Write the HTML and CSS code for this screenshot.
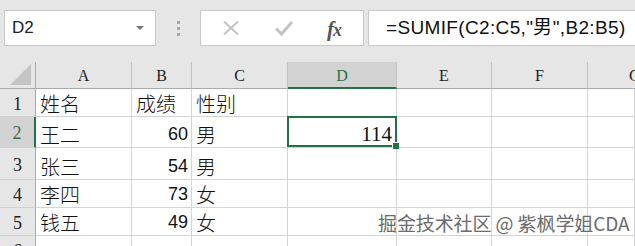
FILE: index.html
```html
<!DOCTYPE html>
<html lang="zh-CN">
<head>
<meta charset="utf-8">
<title>SUMIF</title>
<link rel="stylesheet" href="styles.css">
</head>
<body>
<div class="app">
  <div class="toolbar">
    <div class="namebox">
      <span class="name">D2</span>
      <svg class="caret" width="10" height="6" viewBox="0 0 10 6"><path d="M1 1h8L5 5z" fill="#777"/></svg>
    </div>
    <div class="grip"><i></i><i></i><i></i></div>
    <div class="fbuttons">
      <svg class="ico" width="20" height="16" viewBox="0 0 20 16"><path d="M3 1.5L17 14.5M17 1.5L3 14.5" stroke="#c3c3c3" stroke-width="2" fill="none"/></svg>
      <svg class="ico" width="20" height="16" viewBox="0 0 20 16"><path d="M2 8.5l5.5 5.5L18 2" stroke="#c3c3c3" stroke-width="3" fill="none"/></svg>
      <span class="fx"><i>f</i><i>x</i></span>
    </div>
    <div class="formula">=SUMIF(C2:C5,"男",B2:B5)</div>
  </div>

  <div class="sheet">
    <div class="hd corner"><svg width="22" height="21" viewBox="0 0 22 21"><path d="M21 0V21H0z" fill="#c4c4c4"/></svg></div>
    <div class="hd col">A</div>
    <div class="hd col">B</div>
    <div class="hd col">C</div>
    <div class="hd col sel">D</div>
    <div class="hd col">E</div>
    <div class="hd col">F</div>
    <div class="hd col last">G</div>

    <div class="hd row">1</div>
    <div class="c t">姓名</div>
    <div class="c t">成绩</div>
    <div class="c t">性别</div>
    <div class="c"></div>
    <div class="c"></div>
    <div class="c"></div>
    <div class="c"></div>

    <div class="hd row sel">2</div>
    <div class="c t">王二</div>
    <div class="c n">60</div>
    <div class="c t">男</div>
    <div class="c r active">114</div>
    <div class="c"></div>
    <div class="c"></div>
    <div class="c"></div>

    <div class="hd row">3</div>
    <div class="c t">张三</div>
    <div class="c n">54</div>
    <div class="c t">男</div>
    <div class="c"></div>
    <div class="c"></div>
    <div class="c"></div>
    <div class="c"></div>

    <div class="hd row">4</div>
    <div class="c t">李四</div>
    <div class="c n">73</div>
    <div class="c t">女</div>
    <div class="c"></div>
    <div class="c"></div>
    <div class="c"></div>
    <div class="c"></div>

    <div class="hd row">5</div>
    <div class="c t">钱五</div>
    <div class="c n">49</div>
    <div class="c t">女</div>
    <div class="c"></div>
    <div class="c"></div>
    <div class="c"></div>
    <div class="c"></div>

    <div class="hd row">6</div>
    <div class="c"></div>
    <div class="c"></div>
    <div class="c"></div>
    <div class="c"></div>
    <div class="c"></div>
    <div class="c"></div>
    <div class="c"></div>
  </div>

  <div class="watermark">掘金技术社区 @ 紫枫学姐CDA</div>
</div>
</body>
</html>
```

FILE: styles.css
```css
html, body {
  margin: 0;
  padding: 0;
  background: #ffffff;
}
.app {
  position: relative;
  width: 635px;
  height: 246px;
  overflow: hidden;
  font-family: "Liberation Sans", Arial, sans-serif;
}
.toolbar {
  height: 62px;
  box-sizing: border-box;
  background: #e6e6e6;
  display: flex;
  align-items: flex-start;
  padding: 10px 0 0 4px;
}
.namebox {
  width: 152px;
  height: 36px;
  box-sizing: border-box;
  background: #fff;
  border: 1px solid #c8c8c8;
  display: flex;
  align-items: center;
  justify-content: space-between;
  padding: 0 10px 0 7px;
}
.name {
  font-size: 17px;
  color: #222;
}
.grip {
  width: 44px;
  height: 36px;
  display: flex;
  flex-direction: column;
  align-items: center;
  justify-content: center;
  gap: 3px;
}
.grip i {
  width: 3px;
  height: 3px;
  background: #a8a8a8;
}
.fbuttons {
  width: 164px;
  height: 36px;
  box-sizing: border-box;
  background: #fff;
  border: 1px solid #c8c8c8;
  display: flex;
  align-items: center;
  padding-left: 20px;
  gap: 33px;
}
.fx {
  font-family: "Liberation Serif", "DejaVu Serif", serif;
  font-style: italic;
  font-weight: bold;
  color: #555;
  font-size: 21px;
  letter-spacing: -1px;
  margin-left: 0;
  padding-top: 2px;
}
.fx i { font-style: italic; }
.fx i + i { font-size: 18px; }
.formula {
  margin-left: 4px;
  flex: 1;
  height: 36px;
  box-sizing: border-box;
  background: #fff;
  border: 1px solid #c8c8c8;
  border-right: none;
  padding-left: 17px;
  font-size: 19px;
  letter-spacing: 0.35px;
  line-height: 34px;
  color: #111;
  white-space: nowrap;
}

.sheet {
  display: grid;
  grid-template-columns: 36px 96px 60px 96px 109px 95px 96px 47px;
  grid-template-rows: 27px 28px 31px 32px 28px 28px 28px;
}
.hd {
  box-sizing: border-box;
  background: #e6e6e6;
  font-family: "Liberation Serif", serif;
  color: #222;
  display: flex;
  align-items: center;
  justify-content: center;
}
.col {
  border-right: 1px solid #c2c2c2;
  border-bottom: 1px solid #ababab;
  font-size: 16px;
  padding-top: 2px;
}
.col.last { border-right: none; justify-content: flex-start; padding-left: 41px; }
.col.sel {
  background: #d2d2d2;
  color: #217346;
  border-bottom: 2px solid #217346;
}
.corner {
  border-right: 1px solid #ababab;
  border-bottom: 1px solid #ababab;
  align-items: flex-end;
  justify-content: flex-end;
  padding: 0 3px 3px 0;
}
.corner svg { display: block; }
.row {
  border-right: 1px solid #ababab;
  border-bottom: 1px solid #d0d0d0;
  font-size: 18px;
  padding-top: 3px;
}
.row.sel {
  background: #d2d2d2;
  color: #3d6b50;
  border-right: 2px solid #217346;
}
.c {
  box-sizing: border-box;
  border-right: 1px solid #d4d4d4;
  border-bottom: 1px solid #d4d4d4;
  display: flex;
  align-items: flex-end;
  color: #111;
  white-space: nowrap;
}
.t {
  font-family: "Noto Sans CJK SC", "Noto Sans CJK JP", sans-serif;
  font-weight: 300;
  font-size: 20px;
  line-height: 24px;
  padding-left: 4px;
}
.n {
  font-family: "Liberation Sans", Arial, sans-serif;
  font-size: 18px;
  line-height: 24px;
  justify-content: flex-end;
  padding-right: 3px;
  padding-bottom: 1px;
}
.r {
  font-family: "Liberation Serif", serif;
  font-size: 21px;
  line-height: 26px;
  justify-content: flex-end;
  padding-right: 4px;
}
.active {
  position: relative;
}
.active::before {
  content: "";
  position: absolute;
  left: -1px;
  top: -1px;
  right: -1px;
  bottom: 0;
  border: 2px solid #217346;
}
.active::after {
  content: "";
  position: absolute;
  right: -3px;
  bottom: -2px;
  width: 6px;
  height: 6px;
  background: #217346;
  border: 1px solid #fff;
  border-right: none;
  border-bottom: none;
}

.watermark {
  position: absolute;
  left: 378px;
  top: 211px;
  font-family: "Noto Sans CJK SC", sans-serif;
  font-size: 19px;
  line-height: 24px;
  color: #6c6c6c;
  letter-spacing: -0.1px;
  text-shadow: 0 0 2px #fff, 0 0 1px #fff;
  white-space: nowrap;
}
```
